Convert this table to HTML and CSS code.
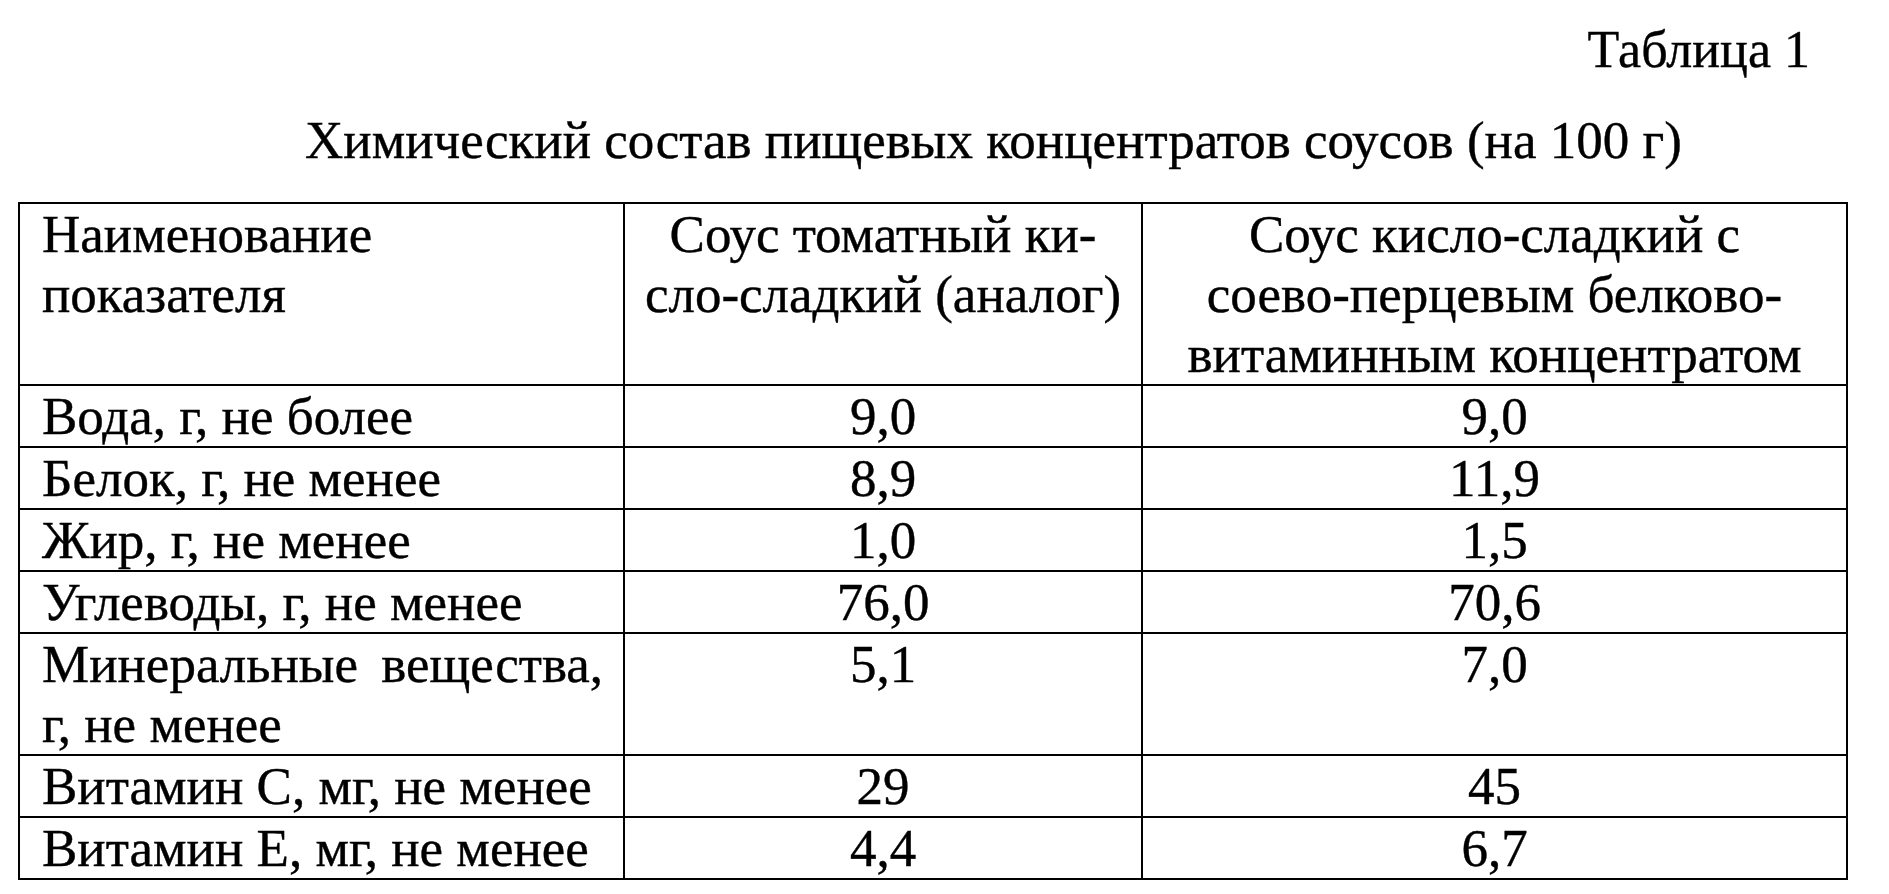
FILE: index.html
```html
<!DOCTYPE html>
<html lang="ru">
<head>
<meta charset="utf-8">
<title>Таблица 1</title>
<link rel="stylesheet" href="styles.css">
</head>
<body>
<div class="page">
  <p class="table-no">Таблица 1</p>
  <h1 class="caption">Химический состав пищевых концентратов соусов (на 100 г)</h1>
  <table class="data">
    <colgroup>
      <col class="c1">
      <col class="c2">
      <col class="c3">
    </colgroup>
    <thead>
      <tr class="head">
        <th class="name">Наименование<br>показателя</th>
        <th class="val">Соус томатный ки-<br>сло-сладкий (аналог)</th>
        <th class="val">Соус кисло-сладкий с<br>соево-перцевым белково-<br>витаминным концентратом</th>
      </tr>
    </thead>
    <tbody>
      <tr><td class="name">Вода, г, не более</td><td class="val">9,0</td><td class="val">9,0</td></tr>
      <tr><td class="name">Белок, г, не менее</td><td class="val">8,9</td><td class="val">11,9</td></tr>
      <tr><td class="name">Жир, г, не менее</td><td class="val">1,0</td><td class="val">1,5</td></tr>
      <tr><td class="name">Углеводы, г, не менее</td><td class="val">76,0</td><td class="val">70,6</td></tr>
      <tr><td class="name just">Минеральные вещества, г, не менее</td><td class="val">5,1</td><td class="val">7,0</td></tr>
      <tr><td class="name">Витамин С, мг, не менее</td><td class="val">29</td><td class="val">45</td></tr>
      <tr><td class="name">Витамин Е, мг, не менее</td><td class="val">4,4</td><td class="val">6,7</td></tr>
    </tbody>
  </table>
</div>
</body>
</html>
```
FILE: styles.css
```css
html, body {
  margin: 0;
  padding: 0;
  background: #ffffff;
}

.page {
  font-family: "Liberation Serif", "Times New Roman", serif;
  color: #000000;
  font-size: 53px;
  line-height: 60px;
  padding: 20px 0 0 18px;
  width: 1871px;
  -webkit-text-stroke: 0.4px #000000;
}

.table-no {
  margin: 0;
  text-align: right;
  padding-right: 79px;
  font-size: 52px;
}

.caption {
  margin: 30px 0 32px 0;
  font-size: 53px;
  font-weight: normal;
  line-height: 60px;
  padding-left: 287px;
}

.data {
  border-collapse: collapse;
  table-layout: fixed;
  width: 1828px;
}

.c1 { width: 605px; }
.c2 { width: 518px; }
.c3 { width: 705px; }

.data th,
.data td {
  border: 2px solid #000000;
  padding: 0 20px;
  vertical-align: top;
  font-weight: normal;
}

.data .name {
  text-align: left;
  padding-left: 22px;
}

.data .val {
  text-align: center;
}

.data .head .val {
  white-space: nowrap;
  padding: 0 4px;
}

.data .just {
  text-align: justify;
}
```
